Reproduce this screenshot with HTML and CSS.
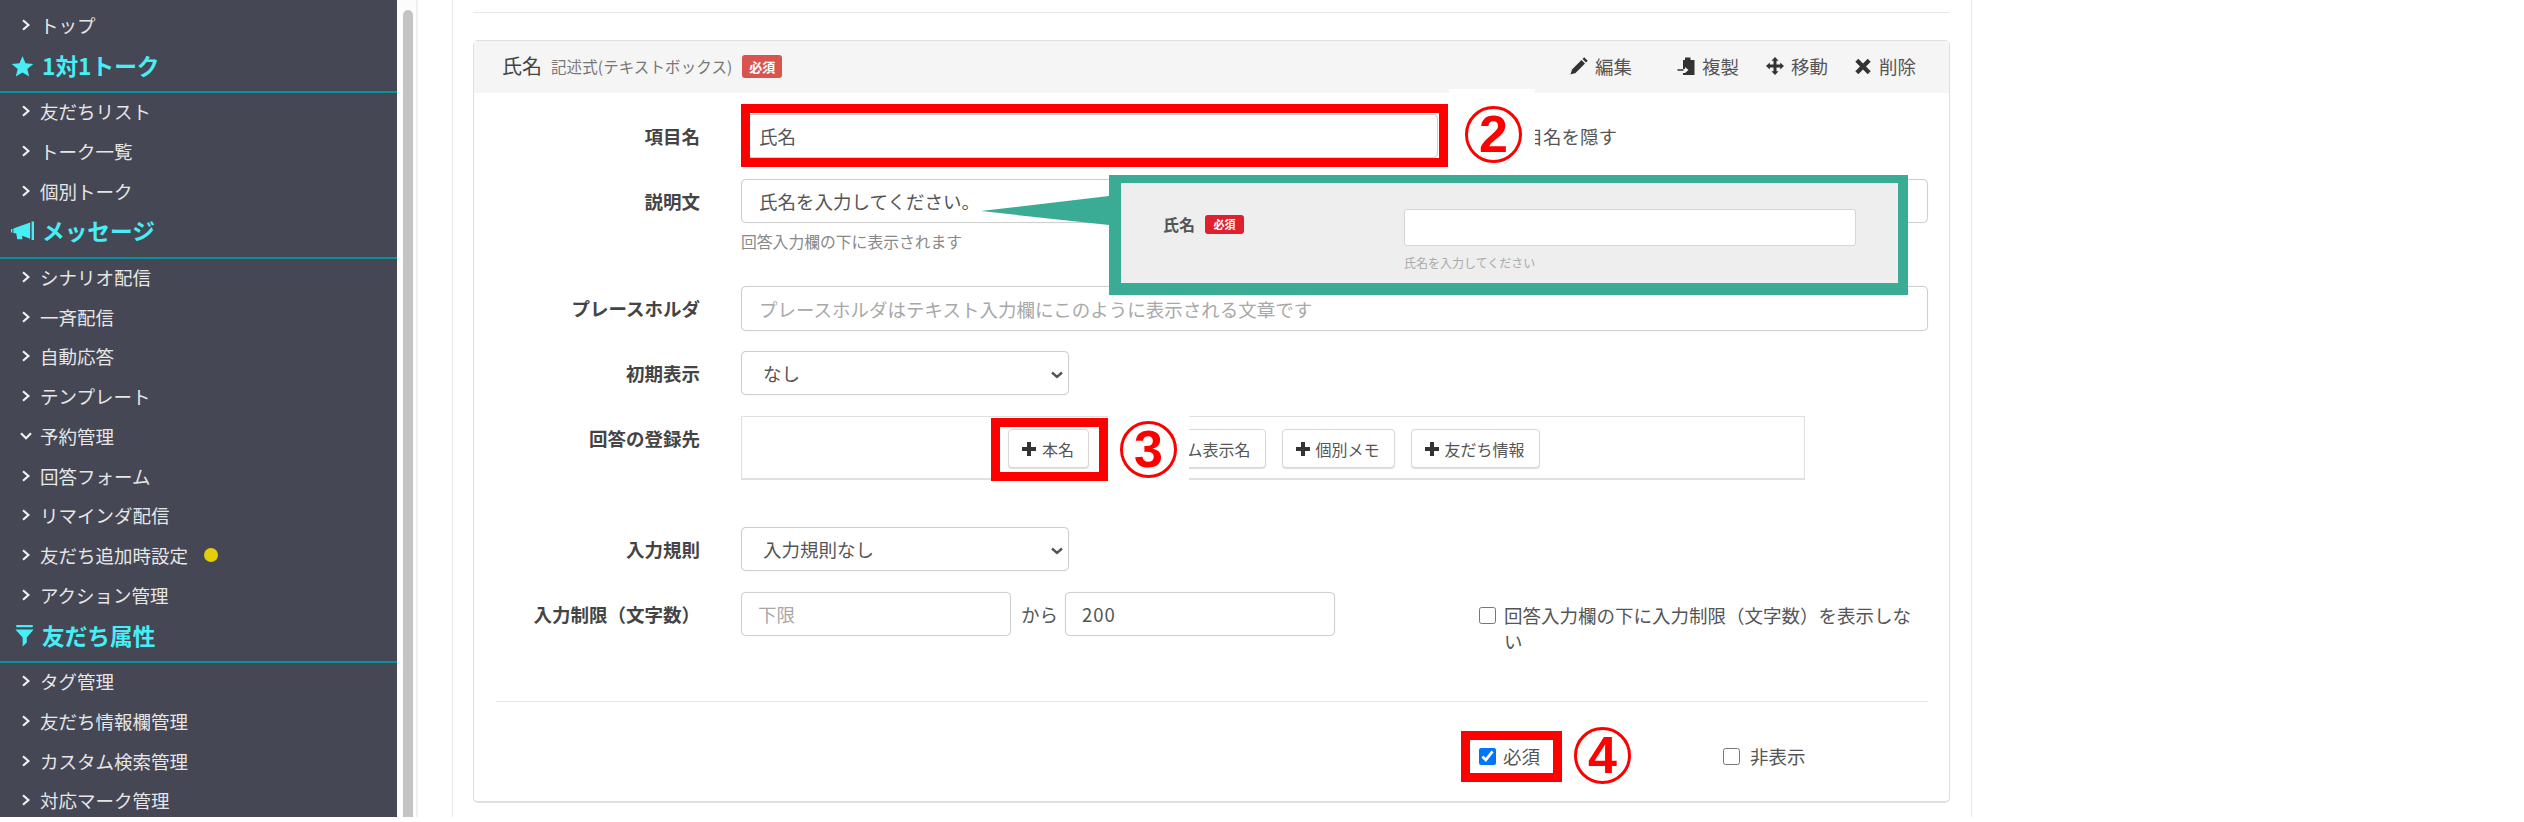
FILE: index.html
```html
<!DOCTYPE html>
<html lang="ja">
<head>
<meta charset="utf-8">
<title>回答フォーム</title>
<link rel="stylesheet" href="styles.css">
</head>
<body>
<svg class="defs" width="0" height="0" aria-hidden="true">
  <symbol id="chev" viewBox="0 0 10 12"><path d="M2 1.2 7.4 6 2 10.8" fill="none" stroke="currentColor" stroke-width="2.2"/></symbol>
  <symbol id="chevd" viewBox="0 0 12 10"><path d="M1 2.2 6 7.2 11 2.2" fill="none" stroke="currentColor" stroke-width="2.2"/></symbol>
  <symbol id="plus" viewBox="0 0 16 16"><path d="M6 1h4v5h5v4h-5v5H6v-5H1V6h5z" fill="currentColor"/></symbol>
</svg>
<div class="page">
  <aside class="sidebar">
    <a class="item"><svg class="chev"><use href="#chev"/></svg>トップ</a>
    <h2 class="group"><svg class="gicon" viewBox="0 0 22 22"><path d="M11 1l3 7.3 7.8.6-6 5.1 1.9 7.6L11 17.5 4.300 21.600l1.900-7.600-6-5.100 7.800-.6z" fill="currentColor"/></svg>1対1トーク</h2>
    <a class="item"><svg class="chev"><use href="#chev"/></svg>友だちリスト</a>
    <a class="item"><svg class="chev"><use href="#chev"/></svg>トーク一覧</a>
    <a class="item"><svg class="chev"><use href="#chev"/></svg>個別トーク</a>
    <h2 class="group"><svg class="gicon" viewBox="0 0 24 22"><path d="M0 9h1.500v3.500H0zM2.500 8.500 20 2v17L11.500 16l.5 3.500H6.500L5.500 13.500 2.500 13zM21.500 1H24v19.500h-2.500z" fill="currentColor"/></svg>メッセージ</h2>
    <a class="item"><svg class="chev"><use href="#chev"/></svg>シナリオ配信</a>
    <a class="item"><svg class="chev"><use href="#chev"/></svg>一斉配信</a>
    <a class="item"><svg class="chev"><use href="#chev"/></svg>自動応答</a>
    <a class="item"><svg class="chev"><use href="#chev"/></svg>テンプレート</a>
    <a class="item"><svg class="chevd"><use href="#chevd"/></svg>予約管理</a>
    <a class="item"><svg class="chev"><use href="#chev"/></svg>回答フォーム</a>
    <a class="item"><svg class="chev"><use href="#chev"/></svg>リマインダ配信</a>
    <a class="item"><svg class="chev"><use href="#chev"/></svg>友だち追加時設定<span class="dot"></span></a>
    <a class="item"><svg class="chev"><use href="#chev"/></svg>アクション管理</a>
    <h2 class="group group-filter"><svg class="gicon" viewBox="0 0 22 24"><path d="M2 0h18v2.500H2zM1 5h20l-7.500 8.500V19L9 23.500V13.500z" fill="currentColor"/></svg>友だち属性</h2>
    <a class="item"><svg class="chev"><use href="#chev"/></svg>タグ管理</a>
    <a class="item"><svg class="chev"><use href="#chev"/></svg>友だち情報欄管理</a>
    <a class="item"><svg class="chev"><use href="#chev"/></svg>カスタム検索管理</a>
    <a class="item"><svg class="chev"><use href="#chev"/></svg>対応マーク管理</a>
  </aside>
  <div class="scrollbar"><div class="thumb"></div></div>
  <main class="content">
    <hr class="top-rule">
    <section class="panel">
      <header class="panel-head">
        <span class="title">氏名</span>
        <span class="subtitle">記述式(テキストボックス)</span>
        <span class="badge">必須</span>
        <div class="actions">
          <a class="action action-edit"><svg class="aicon" viewBox="0 0 18 18"><path d="M0.500 17.500 2 12.500 11.500 3 15 6.500 5.500 16zM12.500 2 14.200.3 17.700 3.800 16 5.500z" fill="currentColor"/></svg>編集</a>
          <a class="action"><svg class="aicon" viewBox="0 0 18 18"><path d="M8 .5h5.500V3H17.500V18H6V16h2l3.500-3L8 10v2H6V3H8zM.5 12.200H6.500v1.600H.5z" fill="currentColor"/></svg>複製</a>
          <a class="action"><svg class="aicon" viewBox="0 0 18 18"><path d="M9 0l3.600 3.800h-2.100v3.700h3.700V5.400L18 9l-3.800 3.600v-2.100h-3.700v3.700h2.100L9 18l-3.600-3.800h2.100v-3.700H3.800v2.100L0 9l3.800-3.600v2.100h3.700V3.800H5.400z" fill="currentColor"/></svg>移動</a>
          <a class="action"><svg class="aicon aicon-x" viewBox="0 0 16 16"><path d="M3.300 0.800 8 5.500 12.700 0.800 15.700 3.800 11 8.500l4.700 4.700-3 3L8 11.500l-4.700 4.700-3-3L5 8.500.3 3.800z" fill="currentColor"/></svg>削除</a>
        </div>
      </header>
      <div class="panel-body">
        <div class="row">
          <label class="label">項目名</label>
          <div class="field field-inline">
            <input class="input input-name" type="text" value="氏名">
            <label class="check check-hide"><input type="checkbox">項目名を隠す</label>
          </div>
        </div>
        <div class="row row-desc">
          <label class="label">説明文</label>
          <div class="field">
            <input class="input" type="text" value="氏名を入力してください。">
            <p class="help">回答入力欄の下に表示されます</p>
          </div>
        </div>
        <div class="row row-holder">
          <label class="label">プレースホルダ</label>
          <div class="field">
            <input class="input input-holder" type="text" placeholder="プレースホルダはテキスト入力欄にこのように表示される文章です">
          </div>
        </div>
        <div class="row">
          <label class="label">初期表示</label>
          <div class="field">
            <select class="input select"><option>なし</option></select>
          </div>
        </div>
        <div class="row row-target">
          <label class="label label-target">回答の登録先</label>
          <div class="field">
            <div class="target-box">
              <button class="btn"><svg class="plus"><use href="#plus"/></svg>本名</button>
              <button class="btn"><svg class="plus"><use href="#plus"/></svg>システム表示名</button>
              <button class="btn"><svg class="plus"><use href="#plus"/></svg>個別メモ</button>
              <button class="btn"><svg class="plus"><use href="#plus"/></svg>友だち情報</button>
            </div>
          </div>
        </div>
        <div class="row">
          <label class="label">入力規則</label>
          <div class="field">
            <select class="input select"><option>入力規則なし</option></select>
          </div>
        </div>
        <div class="row row-limit">
          <label class="label">入力制限（文字数）</label>
          <div class="field field-inline">
            <input class="input input-min" type="text" placeholder="下限">
            <span class="kara">から</span>
            <input class="input input-max" type="text" value="200">
            <label class="check check-limit"><input type="checkbox"><span>回答入力欄の下に入力制限（文字数）を表示しない</span></label>
          </div>
        </div>
        <div class="panel-foot">
          <label class="check check-req"><input type="checkbox" checked>必須</label>
          <label class="check check-off"><input type="checkbox">非表示</label>
        </div>
      </div>
    </section>
  </main>

  <div class="patch patch-2"></div>
  <div class="patch patch-3"></div>
  <div class="redbox red-name"></div>
  <div class="redbox red-real"></div>
  <div class="redbox red-req"></div>
  <span class="num num-2">2</span>
  <span class="num num-3">3</span>
  <span class="num num-4">4</span>
  <div class="callout-tip"></div>
  <div class="callout">
    <div class="preview-row">
      <span class="preview-label">氏名<span class="preview-badge">必須</span></span>
      <div class="preview-field">
        <div class="preview-input"></div>
        <p class="preview-help">氏名を入力してください</p>
      </div>
    </div>
  </div>
</div>
</body>
</html>
```

FILE: styles.css
```css
* { box-sizing: border-box; }
html, body { margin: 0; padding: 0; background: #fff; }
body { font-family: "Noto Sans CJK JP", "Noto Sans", sans-serif; font-size: 18.500px; color: #444; overflow: hidden; }
.defs { position: absolute; }
p, h2 { margin: 0; }

.page { display: flex; height: 817px; overflow: hidden; position: relative; }

/* sidebar */
.sidebar { flex: 0 0 397px; background: #454754; padding-top: 7px; color: #e6e6e6; overflow: hidden; }
.item { display: flex; align-items: center; height: 39.750px; padding: 0 0 4px 21px; font-size: 18.500px; line-height: 24px; }
.chev { width: 10px; height: 12px; margin-right: 9px; flex: none; color: #f2f2f2; }
.chevd { width: 12px; height: 10px; margin: 0 8px 0 -1px; flex: none; color: #f2f2f2; }
.dot { width: 14px; height: 14px; border-radius: 50%; background: #e4cf0a; margin-left: 16px; }
.group { display: flex; align-items: center; height: 46.500px; padding: 0 0 7px 11px; border-bottom: 2px solid #06939c; color: #47eef5; font-size: 22.700px; font-weight: 700; line-height: 28px; }
.gicon { width: 23px; height: 22px; margin-right: 8px; flex: none; }
.group-filter .gicon { margin: 0 6px 0 2px; }

/* scrollbar */
.scrollbar { flex: 0 0 21px; background: #fcfcfc; border-right: 2px solid #f0f0f0; padding: 10px 0 0 6px; }
.thumb { width: 10px; height: 900px; background: #c4c4c4; border-radius: 5px; }

/* main */
.content { flex: 0 0 1520px; margin-left: 34px; border-left: 1px solid #e8e8e8; border-right: 1px solid #e8e8e8; padding: 12px 21px 0 20px; }
.top-rule { border: 0; border-top: 1px solid #e8e8e8; margin: 0 0 27px; }
.panel { width: 1477px; height: 763px; border: 1px solid #e0e0e0; border-bottom-width: 2px; border-radius: 5px; }
.panel-head { display: flex; align-items: center; height: 52px; background: #f5f5f5; padding: 0 33px 2px 28px; }
.title { font-size: 20px; line-height: 26px; color: #444; }
.subtitle { font-size: 15.500px; color: #777; margin-left: 9px; line-height: 24px; letter-spacing: .1px; }
.badge { width: 40px; height: 23px; margin-left: 10px; background: #d9534f; color: #fff; border-radius: 3px; font-size: 13px; font-weight: 700; line-height: 23px; text-align: center; }
.actions { display: flex; margin-left: auto; gap: 27px; }
.action { display: flex; align-items: center; color: #555; font-size: 18.500px; line-height: 24px; }
.action-edit { margin-right: 18px; }
.aicon { width: 18px; height: 18px; margin-right: 7px; color: #333; }
.aicon-x { width: 16px; height: 16px; margin-right: 8px; }

.panel-body { padding: 21px 21px 0 22px; }
.row { display: grid; grid-template-columns: 204px 1fr; column-gap: 41px; margin-bottom: 21px; }
.label { font-size: 18.500px; font-weight: 700; line-height: 44px; text-align: right; color: #444; }
.field { min-width: 0; }
.field-inline { display: flex; align-items: flex-start; }

.input { display: block; width: 100%; height: 44px; padding: 0 17px; border: 1px solid #cfcfcf; border-radius: 5px; background: #fff; box-shadow: 0 0 1px #d8d8d8; font: 18.500px/42px "Noto Sans CJK JP", sans-serif; color: #555; outline: 0; }
.input::placeholder { color: #a8a8a8; opacity: 1; }
.input-name { flex: 0 0 697px; width: 697px; }
.input-holder { height: 45px; }
.row-holder { margin-bottom: 20px; }
.select { width: 328px; padding: 0 0 0 21px; appearance: none; -webkit-appearance: none; background: #fff url("data:image/svg+xml,%3Csvg xmlns='http://www.w3.org/2000/svg' width='12' height='8' viewBox='0 0 12 8'%3E%3Cpath d='M1 1.500 6 6l5-4.500' fill='none' stroke='%23555' stroke-width='2.400'/%3E%3C/svg%3E") no-repeat right 5px top 19px; }
.row-desc { margin-bottom: 20px; }
.help { margin: 7px 0 12px; font-size: 15.800px; line-height: 24px; color: #888; }

.check { display: flex; align-items: center; font-size: 18.500px; line-height: 26px; color: #555; }
.check input { flex: none; width: 17px; height: 17px; margin: 0 10px 0 0; }
.check-hide { margin: 9px 0 0 41px; }

.row-target { margin-bottom: 47px; }
.label-target { line-height: 44px; }
.target-box { display: flex; gap: 16px; width: 1064px; height: 64px; padding: 12px 0 0 266px; border: 1px solid #e0e0e0; border-bottom-width: 2px; }
.btn { display: flex; align-items: center; height: 39px; padding: 0 14px 0 12px; background: #fff; border: 1px solid #d8d8d8; border-radius: 4px; box-shadow: 0 1px 1px #ddd; font: 16px/24px "Noto Sans CJK JP", sans-serif; color: #555; }
.plus { width: 16px; height: 16px; margin-right: 5px; color: #333; }

.row-limit { margin-bottom: 0; }
.input-min, .input-max { flex: none; width: 270px; padding-left: 16px; }
.input-max { letter-spacing: 1px; }
.kara { flex: none; width: 54px; padding-left: 10px; line-height: 44px; font-size: 18.500px; color: #555; }
.check-limit { align-items: flex-start; flex: 1; margin: 10px 0 0 144px; }
.check-limit input { margin: 5px 8px 0 0; }

.panel-foot { display: flex; height: 100px; margin-top: 47px; padding: 41px 0 0 983px; border-top: 1px solid #e8e8e8; align-items: flex-start; }
.check-req input { margin-right: 7px; }
.check-req { width: 244px; }

/* annotations over the form */
.patch { position: absolute; background: #fff; }
.patch-2 { left: 1449px; top: 89px; width: 86px; height: 82px; }
.patch-3 { left: 1108px; top: 413px; width: 81px; height: 72px; }
.redbox { position: absolute; border: 9px solid #f00; }
.red-name { left: 741px; top: 104px; width: 707px; height: 63px; }
.red-real { left: 991px; top: 418px; width: 117px; height: 63px; }
.red-req { left: 1461px; top: 731px; width: 101px; height: 51px; }
.num { position: absolute; width: 57px; height: 57px; border: 3px solid #f00; border-radius: 50%; color: #f00; font: 700 52px/51px "Liberation Sans", sans-serif; text-align: center; }
.num-2 { left: 1465px; top: 106px; }
.num-3 { left: 1120px; top: 421px; }
.num-4 { left: 1574px; top: 727px; }

.callout-tip { position: absolute; left: 981px; top: 196px; width: 128px; height: 29px; background: #3aab94; clip-path: polygon(0 52%, 100% 0, 100% 100%); }
.callout { position: absolute; left: 1109px; top: 175px; width: 799px; height: 120px; background: #eee; border: solid #3aab94; border-width: 8px 10px 12px 12px; padding: 26px 0 0 42px; }
.preview-row { display: flex; }
.preview-label { display: flex; align-items: center; flex: 0 0 241px; height: 30px; font-size: 16px; font-weight: 700; color: #555; }
.preview-badge { width: 39px; height: 19px; margin-left: 10px; background: #e0202c; border-radius: 3px; color: #fff; font-size: 11px; font-weight: 700; line-height: 19px; text-align: center; }
.preview-field { width: 452px; }
.preview-input { height: 37px; background: #fff; border: 1px solid #d6d6d6; border-radius: 3px; }
.preview-help { margin-top: 8px; font-size: 12px; line-height: 18px; color: #aaa; }
```
